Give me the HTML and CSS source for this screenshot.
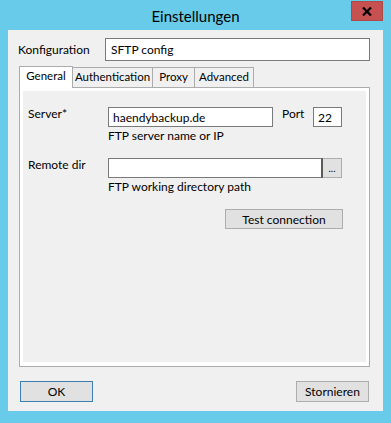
FILE: index.html
```html
<!DOCTYPE html>
<html lang="de">
<head>
  <meta charset="UTF-8" />
  <title>Einstellungen</title>
  <link rel="stylesheet" href="styles.css">
</head>
<body>
  <div class="window">
    <div class="titlebar">
      <span class="title">Einstellungen</span>
      <button class="close" aria-label="Schließen">
        <svg width="10" height="9" viewBox="0 0 10 9"><path d="M1 0.5 L9 8.5 M9 0.5 L1 8.5" stroke="#000" stroke-width="2.2"/></svg>
      </button>
    </div>

    <div class="client">
      <div class="config-row">
        <label class="config-label">Konfiguration</label>
        <input class="textbox config-input" type="text" value="SFTP config">
      </div>

      <div class="tabs">
        <div class="tab tab-general active">General</div>
        <div class="tab tab-auth">Authentication</div>
        <div class="tab tab-proxy">Proxy</div>
        <div class="tab tab-advanced">Advanced</div>
      </div>

      <div class="pane">
        <div class="page">
          <div class="field">
            <label class="field-label">Server*</label>
            <div class="field-body">
              <div class="line">
                <input class="textbox server-input" type="text" value="haendybackup.de">
                <label class="port-label">Port</label>
                <input class="textbox port-input" type="text" value="22">
              </div>
              <div class="hint">FTP server name or IP</div>
            </div>
          </div>

          <div class="field">
            <label class="field-label">Remote dir</label>
            <div class="field-body">
              <div class="line">
                <input class="textbox dir-input" type="text" value="">
                <button class="browse">...</button>
              </div>
              <div class="hint">FTP working directory path</div>
            </div>
          </div>

          <div class="test-row">
            <button class="btn test-btn">Test connection</button>
          </div>
        </div>
      </div>

      <div class="footer">
        <button class="btn default">OK</button>
        <button class="btn">Stornieren</button>
      </div>
    </div>
  </div>
</body>
</html>
```

FILE: styles.css
```css
* {
  box-sizing: border-box;
}
body {
  margin: 0;
  background: #67cbe9;
  font-family: Lato, "Noto Sans", sans-serif;
  font-size: 12px;
  color: #000;
}
.window {
  width: 391px;
  height: 423px;
  background: #67cbe9;
}
.titlebar {
  height: 30px;
  display: flex;
  justify-content: center;
  align-items: center;
  position: relative;
}
.title {
  font-size: 15px;
  color: #000;
  margin-top: 2px;
}
.close {
  position: absolute;
  top: 1px;
  right: 8px;
  width: 32px;
  height: 20px;
  padding: 0;
  border: 1px solid #a94a44;
  background: #c75050;
  display: flex;
  align-items: center;
  justify-content: center;
}
.client {
  margin: 0 8px;
  height: 381px;
  background: #f0f0f0;
  padding: 8px 13px 0 10px;
}
.config-row {
  display: flex;
  align-items: center;
  height: 23px;
}
.config-label {
  width: 87px;
}
.textbox {
  font: inherit;
  border: 1px solid #7a7a7a;
  background: #fff;
  padding: 0 4px;
  margin: 0;
  height: 20px;
  outline: none;
}
.config-input {
  width: 265px;
  height: 23px;
  padding: 0 5px;
}
.tabs {
  display: flex;
  align-items: flex-end;
  margin: 4px 0 0 1px;
  height: 22px;
}
.tab {
  height: 20px;
  border: 1px solid #acacac;
  border-bottom: none;
  background: #f0f0f0;
  font-size: 11.5px;
  text-align: center;
  line-height: 18px;
  margin-left: -1px;
  white-space: nowrap;
}
.tab:first-child {
  margin-left: 0;
}
.tab-general {
  width: 54px;
}
.tab-auth {
  width: 81px;
}
.tab-proxy {
  width: 43px;
}
.tab-advanced {
  width: 60px;
}
.tab.active {
  height: 22px;
  background: #fff;
  position: relative;
  z-index: 1;
  margin-bottom: -1px;
  line-height: 18px;
}
.pane {
  width: 351px;
  height: 280px;
  margin-left: 1px;
  border: 1px solid #acacac;
  background: #fff;
  padding: 3px 2px 3px 3px;
}
.page {
  height: 100%;
  background: #f0f0f0;
  border-right: 1px solid #fff;
  border-bottom: 1px solid #fff;
  padding: 16px 0 0 5px;
}
.field {
  display: flex;
  margin-bottom: 15px;
}
.field-label {
  width: 80px;
  line-height: 14px;
}
.line {
  display: flex;
  align-items: flex-start;
}
.server-input {
  width: 165px;
}
.port-label {
  margin-left: 9px;
  width: 31px;
  line-height: 14px;
}
.port-input {
  width: 29px;
}
.dir-input {
  width: 215px;
  height: 20px;
  border-right: 2px solid #5a5a5a;
}
.browse {
  width: 19px;
  height: 20px;
  padding: 0;
  font: inherit;
  font-size: 10px;
  border: 1px solid #adadad;
  border-left: none;
  background: #e1e1e1;
  line-height: 14px;
}
.hint {
  margin-top: 1px;
  line-height: 15px;
}
.test-row {
  display: flex;
  justify-content: flex-end;
  padding-right: 23px;
  margin-top: 15px;
}
.btn {
  font: inherit;
  width: 73px;
  height: 21px;
  padding: 0;
  border: 1px solid #adadad;
  background: #e1e1e1;
  color: #000;
}
.btn.default {
  border-color: #3c7fb1;
}
.test-btn {
  width: 118px;
  height: 20px;
}
.footer {
  display: flex;
  justify-content: space-between;
  margin-top: 14px;
  padding: 0 1px 0 2px;
}
```
